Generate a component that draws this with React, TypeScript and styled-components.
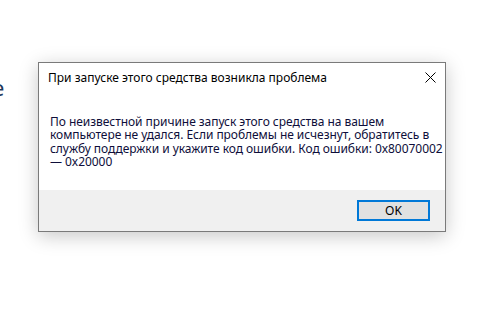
import React from "react";
import styled, { createGlobalStyle } from "styled-components";

const GlobalStyle = createGlobalStyle`
  html, body {
    margin: 0;
    padding: 0;
    background: #ffffff;
  }
  body {
    width: 492px;
    height: 326px;
    overflow: hidden;
    font-family: "Noto Sans", "Open Sans", sans-serif;
  }
`;

const Page = styled.div`
  position: relative;
  width: 492px;
  height: 326px;
  overflow: hidden;
  background: #ffffff;
`;

const BackHeading = styled.div`
  padding-top: 74px;
  margin-left: -8px;
  font-family: "Noto Sans", sans-serif;
  font-size: 22px;
  line-height: 26px;
  color: #1f3a5c;
`;

const Dialog = styled.div`
  position: absolute;
  left: 38px;
  top: 62px;
  width: 406px;
  height: 168px;
  border: 1px solid #7a7a7a;
  background: #ffffff;
  box-shadow: 0 4px 18px rgba(0, 0, 0, 0.22);
  display: flex;
  flex-direction: column;
`;

const TitleBar = styled.div`
  height: 28px;
  display: flex;
  align-items: center;
  justify-content: space-between;
  padding: 0 9px 0 9px;
`;

const Title = styled.span`
  font-size: 12px;
  color: #000000;
`;

const Close = styled.button`
  width: 12px;
  height: 12px;
  padding: 0;
  border: none;
  background: none;
  display: flex;
  align-items: center;
  justify-content: center;
`;

const Body = styled.div`
  flex: 1;
  padding: 24px 4px 0 11px;
`;

const Message = styled.p`
  margin: 0;
  font-size: 12px;
  line-height: 13.3px;
  color: #0e0e3a;
  white-space: nowrap;
  letter-spacing: -0.05px;
`;

const Footer = styled.div`
  height: 41px;
  background: #f0f0f0;
  display: flex;
  justify-content: flex-end;
  align-items: flex-start;
  padding: 10px 15px 0 0;
  box-sizing: border-box;
`;

const Button = styled.button`
  width: 73px;
  height: 21px;
  box-sizing: border-box;
  border: 2px solid #0078d7;
  background: #e1e1e1;
  font-family: "Noto Sans", sans-serif;
  font-size: 12px;
  color: #000000;
  padding: 0;
  line-height: 15px;
`;

export default function App() {
  return (
    <Page>
      <GlobalStyle />
      <BackHeading>e</BackHeading>
      <Dialog>
        <TitleBar>
          <Title>При запуске этого средства возникла проблема</Title>
          <Close aria-label="Закрыть">
            <svg width="11" height="11" viewBox="0 0 11 11">
              <path d="M0.5 0.5 L10.5 10.5 M10.5 0.5 L0.5 10.5" stroke="#000" strokeWidth="1" />
            </svg>
          </Close>
        </TitleBar>
        <Body>
          <Message>
            По неизвестной причине запуск этого средства на вашем
            <br />
            компьютере не удался. Если проблемы не исчезнут, обратитесь в
            <br />
            службу поддержки и укажите код ошибки. Код ошибки: 0x80070002
            <br />— 0x20000
          </Message>
        </Body>
        <Footer>
          <Button>OK</Button>
        </Footer>
      </Dialog>
    </Page>
  );
}
